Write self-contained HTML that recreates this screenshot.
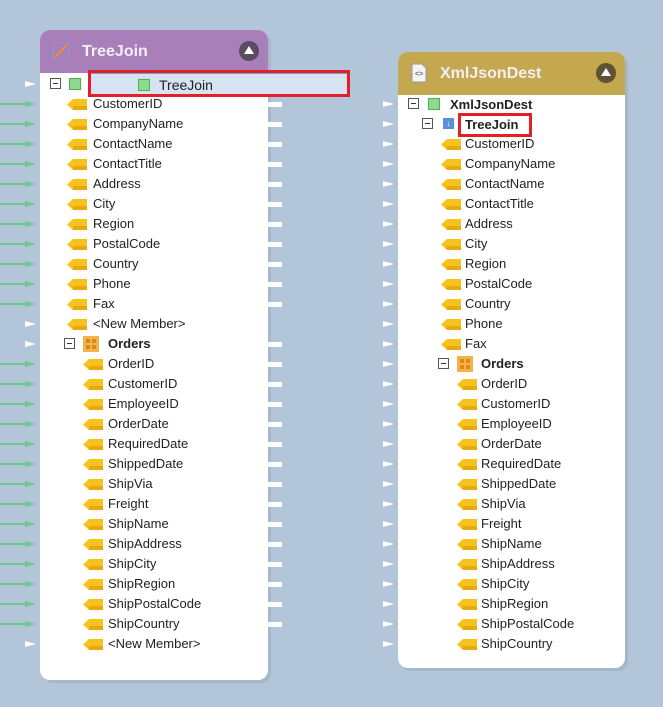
<!DOCTYPE html>
<html><head><style>
body{margin:0;width:663px;height:707px;background:#b3c5d9;position:relative;overflow:hidden;font-family:"Liberation Sans",sans-serif;font-size:13px;color:#222}
.p{position:absolute;background:#fff;border-radius:10px;box-shadow:3px 3px 0 #a6b7cb}
.h{position:absolute;left:0;right:0;top:0;height:43px;border-radius:10px 10px 0 0;color:#f4eef6;font-weight:bold;font-size:16px}
.h span{position:absolute;left:42px;top:13px}
.up{position:absolute;right:9px;top:11px;width:20px;height:20px;border-radius:50%;background:#5a4a5e}
.up:after{content:"";position:absolute;left:5px;top:5px;border-left:5px solid transparent;border-right:5px solid transparent;border-bottom:8px solid #fff}
.t{position:absolute;white-space:nowrap;line-height:16px}
.f{position:absolute;width:20px;height:11px}
.ex{position:absolute;width:9px;height:9px;border:1px solid #555;background:#fff}
.ex:after{content:"";position:absolute;left:2px;top:4px;width:5px;height:1px;background:#333}
.in{position:absolute;width:0;height:0;border-top:3px solid transparent;border-bottom:3px solid transparent;border-left:11px solid #fff}
.out{position:absolute;width:14px;height:5px;background:#fff}
.g{position:absolute;height:2px;background:#6cc98e}
.b{font-weight:bold}
</style></head><body>
<svg width="0" height="0" style="position:absolute"><defs><symbol id="tag" viewBox="0 0 20 11"><polygon points="0,5.5 6,0 20,0 20,11 6,11" fill="#f7c21d"/><rect x="6" y="7" width="14" height="4" fill="#e9a80c"/></symbol></defs></svg>

<div class="p" style="left:40px;top:30px;width:228px;height:650px">
<div class="h" style="background:#a87fb8"><svg style="position:absolute;left:12px;top:12px" width="18" height="18"><rect x="1" y="1" width="16" height="16" fill="none" stroke="#8aa0d8" stroke-dasharray="2 1"/><line x1="3" y1="15" x2="15" y2="3" stroke="#f08a3a" stroke-width="2"/></svg><span>TreeJoin</span><div class="up" style="background:#5b4a62"></div></div>
</div>
<div class="p" style="left:398px;top:52px;width:227px;height:616px">
<div class="h" style="background:#c4a84f"><svg style="position:absolute;left:13px;top:11px" width="16" height="20"><path d="M1 1h10l4 4v14H1z" fill="#f4f4f4" stroke="#999"/><text x="4" y="13" font-size="7" fill="#666">&lt;&gt;</text></svg><span>XmlJsonDest</span><div class="up" style="background:#5e5335"></div></div>
</div>

<div class="in" style="left:25px;top:81px"></div>
<div class="ex" style="left:50px;top:78px"></div>
<div style="position:absolute;left:69px;top:78px;width:10px;height:10px;background:#8fd88f;border:1px solid #4caf50"></div>
<div style="position:absolute;left:88px;top:70px;width:256px;height:21px;border:3px solid #e32028;background:#fff"><div style="position:absolute;left:0;top:0;right:0;bottom:0;background:#d6e3f2;border-top:1px solid #6f9cd3"></div></div>
<div style="position:absolute;left:138px;top:79px;width:10px;height:10px;background:#8fd88f;border:1px solid #4caf50"></div>
<div class="t" style="left:159px;top:77px;font-size:14px">TreeJoin</div>

<div class="in" style="left:383px;top:101px"></div>
<div class="ex" style="left:408px;top:98px"></div>
<div style="position:absolute;left:428px;top:98px;width:10px;height:10px;background:#8fd88f;border:1px solid #4caf50"></div>
<div class="t b" style="left:450px;top:97px">XmlJsonDest</div>
<div class="in" style="left:383px;top:121px"></div>
<div class="ex" style="left:422px;top:118px"></div>
<div style="position:absolute;left:443px;top:118px;width:11px;height:11px;background:#5b8fd6;color:#fff;font-size:8px;line-height:11px;text-align:center">↓</div>
<div style="position:absolute;left:458px;top:113px;width:68px;height:18px;border:3px solid #e32028"></div>
<div class="t b" style="left:465px;top:117px">TreeJoin</div>

<div id="gen"></div>
<script>
var L=["CustomerID","CompanyName","ContactName","ContactTitle","Address","City","Region","PostalCode","Country","Phone","Fax"];
var O=["OrderID","CustomerID","EmployeeID","OrderDate","RequiredDate","ShippedDate","ShipVia","Freight","ShipName","ShipAddress","ShipCity","ShipRegion","ShipPostalCode","ShipCountry"];
var h="";
function tag(x,y){return '<svg class="f" style="left:'+x+'px;top:'+(y-5)+'px" viewBox="0 0 20 11"><use href="#tag"/></svg>';}
function line(y,green){return green?'<div class="g" style="left:0;width:28px;top:'+(y-1)+'px"></div><div class="in" style="left:25px;top:'+(y-3)+'px;border-left-color:#6cc98e"></div>':'<div class="in" style="left:25px;top:'+(y-3)+'px"></div>';}
function out(y){return '<div class="out" style="left:268px;top:'+(y-2)+'px"></div>';}
var y=104;
var grid='<rect width="16" height="16" fill="#f3b24a"/><rect x="3" y="3" width="4" height="4" fill="#d98a1a"/><rect x="9" y="3" width="4" height="4" fill="#d98a1a"/><rect x="3" y="9" width="4" height="4" fill="#d98a1a"/><rect x="9" y="9" width="4" height="4" fill="#d98a1a"/>';
L.forEach(function(n){h+=line(y,1)+tag(67,y)+'<div class="t" style="left:93px;top:'+(y-8)+'px">'+n+'</div>'+out(y);y+=20;});
h+=line(y,0)+tag(67,y)+'<div class="t" style="left:93px;top:'+(y-8)+'px">&lt;New Member&gt;</div>';y+=20;
h+=line(y,0)+'<div class="ex" style="left:64px;top:'+(y-6)+'px"></div><svg style="position:absolute;left:83px;top:'+(y-8)+'px" width="16" height="16">'+grid+'</svg><div class="t b" style="left:108px;top:'+(y-8)+'px">Orders</div>'+out(y);y+=20;
O.forEach(function(n){h+=line(y,1)+tag(83,y)+'<div class="t" style="left:108px;top:'+(y-8)+'px">'+n+'</div>'+out(y);y+=20;});
h+=line(y,0)+tag(83,y)+'<div class="t" style="left:108px;top:'+(y-8)+'px">&lt;New Member&gt;</div>';
function rin(y){return '<div class="in" style="left:383px;top:'+(y-3)+'px"></div>';}
y=144;
L.forEach(function(n){h+=rin(y)+tag(441,y)+'<div class="t" style="left:465px;top:'+(y-8)+'px">'+n+'</div>';y+=20;});
h+=rin(y)+'<div class="ex" style="left:438px;top:'+(y-6)+'px"></div><svg style="position:absolute;left:457px;top:'+(y-8)+'px" width="16" height="16">'+grid+'</svg><div class="t b" style="left:481px;top:'+(y-8)+'px">Orders</div>';y+=20;
O.forEach(function(n){h+=rin(y)+tag(457,y)+'<div class="t" style="left:481px;top:'+(y-8)+'px">'+n+'</div>';y+=20;});
document.getElementById("gen").innerHTML=h;
</script>
</body></html>
